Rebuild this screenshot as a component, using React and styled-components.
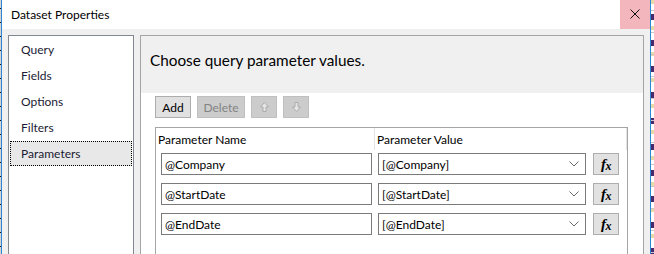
import React from "react";
import styled, { createGlobalStyle } from "styled-components";

const Global = createGlobalStyle`
  html, body { margin: 0; padding: 0; background: #f0f0f0; }
  body {
    font-family: Lato, "Open Sans", sans-serif;
    font-size: 12px;
    color: #000;
    overflow: hidden;
  }
`;

const Screen = styled.div`
  display: flex;
  width: 654px;
  height: 254px;
  overflow: hidden;
`;

const LeftEdge = styled.div`
  flex: none;
  width: 1px;
  background: repeating-linear-gradient(
    to bottom,
    #d4d4d4 0 8px,
    #1a1a1a 8px 9px,
    #d4d4d4 9px 14px
  );
`;

const BackStrip = styled.div`
  flex: none;
  width: 3px;
  background:
    repeating-linear-gradient(to bottom, transparent 0 10px, #c8c8c8 10px 11px, transparent 11px 22px),
    repeating-linear-gradient(to bottom, #e8d9a8 0 4px, #fff 4px 14px, #4a2a6a 14px 20px, #fff 20px 26px);
`;

const Window = styled.div`
  flex: none;
  width: 650px;
  box-sizing: border-box;
  border-left: 1px solid #2b87d3;
  border-right: 1px solid #2b87d3;
  display: flex;
  flex-direction: column;
  background: #f0f0f0;
`;

const TitleBar = styled.div`
  flex: none;
  height: 29px;
  background: #fff;
  display: flex;
  align-items: stretch;
  justify-content: space-between;
`;

const Title = styled.div`
  padding-left: 9px;
  display: flex;
  align-items: center;
  font-size: 12px;
  padding-bottom: 1px;
`;

const CloseButton = styled.div`
  width: 30px;
  background: #f3b6bc;
  display: flex;
  align-items: center;
  justify-content: center;
  padding-bottom: 2px;
  box-sizing: border-box;
`;

const Body = styled.div`
  flex: 1;
  min-height: 0;
  overflow: hidden;
  display: flex;
  align-items: flex-start;
  gap: 6px;
  padding: 6px 0 0 6px;
`;

const Nav = styled.div`
  flex: none;
  width: 126px;
  height: 240px;
  box-sizing: border-box;
  border: 1px solid #828790;
  background: #fff;
  padding: 1px 1px;
`;

const NavItem = styled.div`
  height: 25px;
  margin-bottom: 1px;
  box-sizing: border-box;
  border: 1px dotted ${(p) => (p.$selected ? "#000" : "transparent")};
  background: ${(p) => (p.$selected ? "#e8e8e8" : "transparent")};
  padding-left: 10px;
  display: flex;
  align-items: center;
  color: #1b1b33;
`;

const Panel = styled.div`
  flex: none;
  width: 504px;
  height: 240px;
  box-sizing: border-box;
  border: 1px solid #a5a5a5;
  background: #fff;
  display: flex;
  flex-direction: column;
`;

const PanelHeader = styled.div`
  flex: none;
  height: 57px;
  box-sizing: border-box;
  background: #f0f0f0;
  padding: 14px 0 0 9px;
  font-size: 15.3px;
  line-height: 20px;
`;

const PanelContent = styled.div`
  flex: 1;
  display: flex;
  flex-direction: column;
  padding: 3px 0 0 14px;
`;

const Toolbar = styled.div`
  display: flex;
  gap: 6px;
  height: 22px;
`;

const ToolButton = styled.div`
  width: ${(p) => p.$w}px;
  height: 22px;
  box-sizing: border-box;
  border: 1px solid ${(p) => (p.$disabled ? "#bfbfbf" : "#adadad")};
  background: ${(p) => (p.$disabled ? "#cccccc" : "#e1e1e1")};
  color: ${(p) => (p.$disabled ? "#838383" : "#000")};
  display: flex;
  align-items: center;
  justify-content: center;
`;

const Grid = styled.div`
  margin-top: 9px;
  width: 473px;
  height: 140px;
  box-sizing: border-box;
  border: 1px solid #a5a5a5;
  display: flex;
  flex-direction: column;
`;

const GridHeader = styled.div`
  display: grid;
  grid-template-columns: 219px 1fr;
  height: 22px;
`;

const HeaderCell = styled.div`
  display: flex;
  align-items: center;
  padding-left: 2px;
  border-right: 1px solid #e3e3e3;
`;

const Rows = styled.div`
  display: flex;
  flex-direction: column;
  gap: 8px;
  padding: 3px 0 0 5px;
`;

const Row = styled.div`
  display: flex;
  align-items: center;
  height: 22px;
`;

const TextBox = styled.div`
  width: ${(p) => p.$w}px;
  height: 22px;
  box-sizing: border-box;
  border: 1px solid #7a7a7a;
  background: #fff;
  display: flex;
  align-items: center;
  justify-content: space-between;
  padding: 0 6px 0 3px;
  margin-right: ${(p) => p.$mr}px;
`;

const FxButton = styled.div`
  width: 26px;
  height: 22px;
  box-sizing: border-box;
  border: 1px solid #adadad;
  background: #e1e1e1;
  display: flex;
  align-items: center;
  justify-content: center;
`;

const FxGlyph = styled.span`
  font-family: "Liberation Serif", "DejaVu Serif", serif;
  font-weight: bold;
  font-style: italic;
  font-size: 15px;
  line-height: 1;
  letter-spacing: -0.5px;
  & > small {
    font-size: 12px;
    position: relative;
    top: 1px;
  }
`;

const Chevron = () => (
  <svg width="10" height="6" viewBox="0 0 10 6">
    <polyline points="0.5,0.5 5,5 9.5,0.5" fill="none" stroke="#6a6a6a" strokeWidth="1" />
  </svg>
);

const ArrowIcon = ({ down }) => (
  <svg width="9" height="10" viewBox="0 0 9 10" style={down ? { transform: "rotate(180deg)" } : undefined}>
    <polygon points="4.5,0.5 8.5,5 6,5 6,9.5 3,9.5 3,5 0.5,5" fill="#e6e6e6" stroke="#ababab" strokeWidth="1" />
  </svg>
);

const CloseIcon = () => (
  <svg width="10" height="10" viewBox="0 0 10 10">
    <path d="M0.5 0.5 L9.5 9.5 M9.5 0.5 L0.5 9.5" stroke="#111" strokeWidth="1" />
  </svg>
);

const navItems = ["Query", "Fields", "Options", "Filters", "Parameters"];
const params = ["@Company", "@StartDate", "@EndDate"];

export default function App() {
  return (
    <>
      <Global />
      <Screen>
        <LeftEdge />
        <Window>
          <TitleBar>
            <Title>Dataset Properties</Title>
            <CloseButton>
              <CloseIcon />
            </CloseButton>
          </TitleBar>
          <Body>
            <Nav>
              {navItems.map((n) => (
                <NavItem key={n} $selected={n === "Parameters"}>
                  {n}
                </NavItem>
              ))}
            </Nav>
            <Panel>
              <PanelHeader>Choose query parameter values.</PanelHeader>
              <PanelContent>
                <Toolbar>
                  <ToolButton $w={36}>Add</ToolButton>
                  <ToolButton $w={48} $disabled>
                    Delete
                  </ToolButton>
                  <ToolButton $w={26} $disabled>
                    <ArrowIcon />
                  </ToolButton>
                  <ToolButton $w={26} $disabled>
                    <ArrowIcon down />
                  </ToolButton>
                </Toolbar>
                <Grid>
                  <GridHeader>
                    <HeaderCell>Parameter Name</HeaderCell>
                    <HeaderCell>Parameter Value</HeaderCell>
                  </GridHeader>
                  <Rows>
                    {params.map((p) => (
                      <Row key={p}>
                        <TextBox $w={211} $mr={6}>
                          {p}
                        </TextBox>
                        <TextBox $w={208} $mr={7}>
                          <span>[{p}]</span>
                          <Chevron />
                        </TextBox>
                        <FxButton>
                          <FxGlyph>
                            f<small>x</small>
                          </FxGlyph>
                        </FxButton>
                      </Row>
                    ))}
                  </Rows>
                </Grid>
              </PanelContent>
            </Panel>
          </Body>
        </Window>
        <BackStrip />
      </Screen>
    </>
  );
}
